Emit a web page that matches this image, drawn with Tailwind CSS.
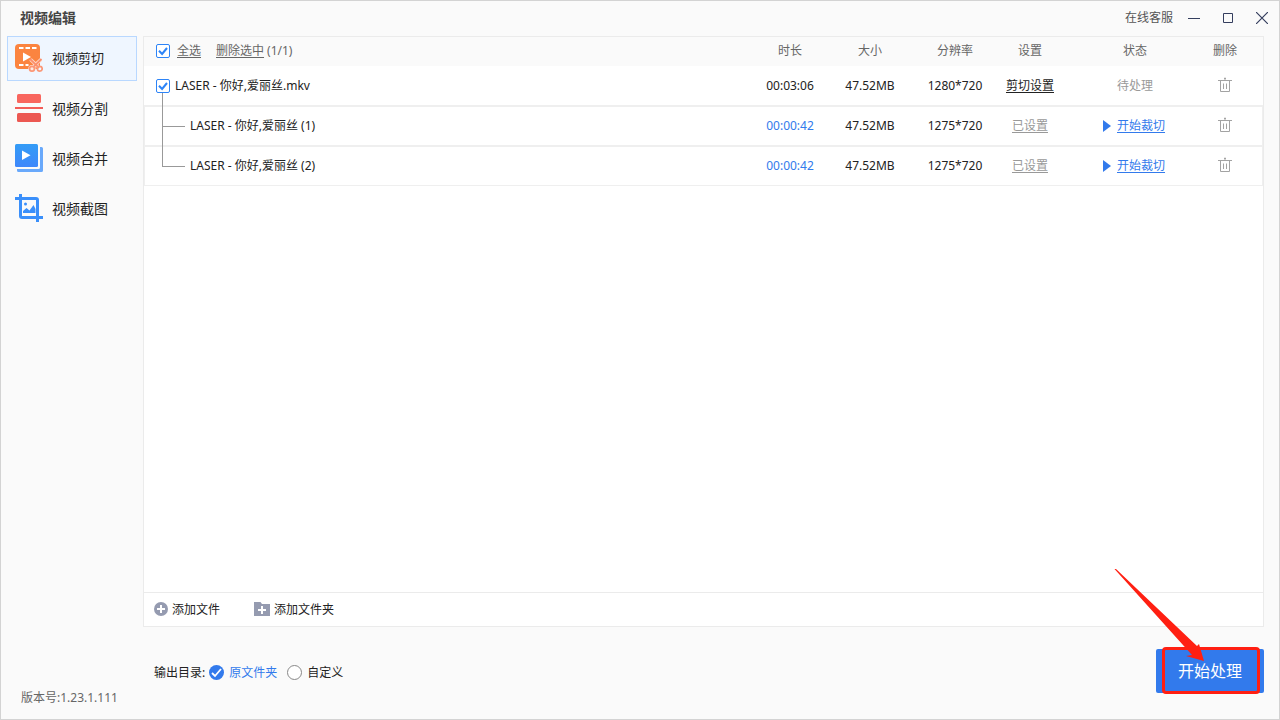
<!DOCTYPE html>
<html lang="zh-CN">
<head>
<meta charset="utf-8">
<meta name="viewport" content="width=device-width, initial-scale=1">
<title>视频编辑</title>
<script src="https://cdn.jsdelivr.net/npm/@tailwindcss/browser@4"></script>
</head>
<body class="flex h-screen flex-col border border-[#d3d3d3] bg-[#fafafa] font-['Noto_Sans','Noto_Sans_CJK_SC',sans-serif] text-xs text-[#333]">
<svg class="hidden" aria-hidden="true">
  <defs>
    <symbol id="trash" viewBox="0 0 14 16"><path d="M0 3.500h14M7 0.500v3M6 1.500h2M2.500 3.500v11h9v-11M5.500 6.500v5.500M8.500 6.500v5.500" fill="none" stroke="#a3a3a3"/></symbol>
    <symbol id="tick" viewBox="0 0 14 14"><path d="M3 6.700l3.100 3.300L11 4" fill="none" stroke="#2d84f7" stroke-width="2"/></symbol>
    <symbol id="play" viewBox="0 0 8 12"><path d="M0 0l8 6-8 6z" fill="#327aec"/></symbol>
  </defs>
</svg>

<header class="flex h-[35px] shrink-0 items-center justify-between pr-[11px] pb-px pl-[19px]">
  <h1 class="text-sm font-semibold text-[#444]">视频编辑</h1>
  <div class="flex items-center">
    <a href="#" class="mr-[15px] text-[#555]">在线客服</a>
    <div class="flex items-center gap-[22px]">
      <button type="button" aria-label="最小化"><svg class="block" width="12" height="12" viewBox="0 0 12 12"><path d="M0 6.500h12" stroke="#343e5e"/></svg></button>
      <button type="button" aria-label="最大化"><svg class="block" width="12" height="12" viewBox="0 0 12 12"><path d="M1.500 1.500h9v9h-9z" fill="none" stroke="#343e5e"/></svg></button>
      <button type="button" aria-label="关闭"><svg class="block" width="12" height="12" viewBox="0 0 12 12"><path d="M0 0l12 12M12 0L0 12" stroke="#343e5e" stroke-width="1.200"/></svg></button>
    </div>
  </div>
</header>

<div class="flex min-h-0 flex-1">
  <aside class="flex w-[142px] shrink-0 flex-col justify-between pb-[13px] pl-[6px]">
    <nav class="flex w-[130px] flex-col gap-[5px] text-sm text-[#222]">
      <a href="#" aria-current="page" class="flex h-[45px] items-center gap-[9px] border border-[#b9d8ff] bg-[#eff6ff] pl-[7px]">
        <svg class="mb-[2px]" width="28" height="28" viewBox="0 0 28 28">
          <rect width="25" height="25" rx="4" fill="#fb8440"/>
          <path d="M4 4h4.500M10.500 4h4.500M17 4h4.500M4 21h4.500M10.500 21h3" stroke="#fff" stroke-width="2"/>
          <path d="M8 8.500l8 4.500-8 4.500z" fill="#fff"/>
          <path d="M15.500 15.500L23 22.500M26 15.500L18.500 22.500" stroke="#fdd9cb" stroke-width="3.500"/>
          <circle cx="17" cy="24.500" r="3.600" fill="#fdeae2"/>
          <path d="M15 15L23 22.800M26.500 15L18.500 22.800" stroke="#fb8f6c" stroke-width="1.800"/>
          <g fill="none" stroke="#fb9676" stroke-width="1.700"><circle cx="17" cy="24.700" r="2.400"/><circle cx="24.800" cy="24.700" r="2.400"/></g>
        </svg>
        <span class="text-[13px]">视频剪切</span>
      </a>
      <a href="#" class="flex h-[45px] items-center gap-[9px] border border-transparent pl-[7px]">
        <svg class="mb-[2px]" width="28" height="28" viewBox="0 0 28 28">
          <rect x="2" width="24" height="9" rx="1.500" fill="#f9665e"/>
          <rect y="13" width="28" height="2" fill="#f35d58"/>
          <rect x="2" y="19" width="24" height="9" rx="1.500" fill="#ec5852"/>
        </svg>
        <span>视频分割</span>
      </a>
      <a href="#" class="flex h-[45px] items-center gap-[9px] border border-transparent pl-[7px]">
        <svg class="mb-[2px]" width="28" height="28" viewBox="0 0 28 28">
          <defs><linearGradient id="blue" x1="0" y1="0" x2="0" y2="1"><stop stop-color="#339cf6"/><stop offset="1" stop-color="#3e87fb"/></linearGradient></defs>
          <path d="M25 3h1.500q1.500 0 1.500 1.500v22q0 1.500-1.500 1.500h-23q-1.500 0-1.500-1.500V25h21.500q1.500 0 1.500-1.500z" fill="#69a9fb"/>
          <rect width="23" height="23" rx="1.500" fill="url(#blue)"/>
          <path d="M7 6.500l8.500 4.800L7 16z" fill="#fff"/>
        </svg>
        <span>视频合并</span>
      </a>
      <a href="#" class="flex h-[45px] items-center gap-[9px] border border-transparent pl-[7px]">
        <svg class="mb-[2px]" width="28" height="28" viewBox="0 0 28 28">
          <path d="M0 4.500h21q1.500 0 1.500 1.500v22M5.500 0v22q0 1.500 1.500 1.500h21" fill="none" stroke="#3a8ffa" stroke-width="3"/>
          <circle cx="10.500" cy="10" r="1.500" fill="#3a8ffa"/>
          <path d="M8 19v-2l3.500-3 3 2.500 4-5.500 2 4v4z" fill="#3a8ffa"/>
        </svg>
        <span>视频截图</span>
      </a>
    </nav>
    <p class="pl-[14px] text-[#666]">版本号:1.23.1.111</p>
  </aside>

  <main class="flex min-w-0 flex-1 flex-col pr-[15px]">
    <section class="flex min-h-0 flex-1 flex-col border border-[#ebebeb] bg-white">
      <div class="min-h-0 flex-1">
        <table class="w-full table-fixed border-separate border-spacing-0">
          <colgroup><col><col class="w-20"><col class="w-20"><col class="w-[90px]"><col class="w-[60px]"><col class="w-[150px]"><col class="w-[53px]"></colgroup>
          <thead class="bg-[#fafafa] text-[#666]">
            <tr class="h-[29px]">
              <th class="p-0 pb-[2px] pl-3 font-normal">
                <div class="flex items-center">
                  <label class="mr-[7px] grid size-[14px]">
                    <input type="checkbox" checked aria-label="全选" class="col-start-1 row-start-1 size-[14px] appearance-none rounded-xs border border-[#2d84f7] bg-white">
                    <svg class="pointer-events-none col-start-1 row-start-1 size-[14px]"><use href="#tick"/></svg>
                  </label>
                  <button type="button" class="mr-[15px] underline underline-offset-2">全选</button>
                  <button type="button" class="mr-[3px] underline underline-offset-2">删除选中</button>
                  <span>(1/1)</span>
                </div>
              </th>
              <th class="p-0 pb-[2px] font-normal">时长</th>
              <th class="p-0 pb-[2px] font-normal">大小</th>
              <th class="p-0 pb-[2px] font-normal">分辨率</th>
              <th class="p-0 pb-[2px] font-normal">设置</th>
              <th class="p-0 pb-[2px] font-normal">状态</th>
              <th class="p-0 pr-[23px] pb-[2px] font-normal">删除</th>
            </tr>
          </thead>
          <tbody class="text-center text-[#222]">
            <tr class="h-10">
              <td class="border-b border-[#efefef] p-0 pl-3">
                <label class="flex items-center gap-[5px]">
                  <span class="grid size-[14px]">
                    <input type="checkbox" checked class="col-start-1 row-start-1 size-[14px] appearance-none rounded-xs border border-[#2d84f7] bg-white">
                    <svg class="pointer-events-none col-start-1 row-start-1 size-[14px]"><use href="#tick"/></svg>
                  </span>
                  <span>LASER - 你好,爱丽丝.mkv</span>
                </label>
              </td>
              <td class="border-b border-[#efefef] p-0">00:03:06</td>
              <td class="border-b border-[#efefef] p-0">47.52MB</td>
              <td class="border-b border-[#efefef] p-0">1280*720</td>
              <td class="border-b border-[#efefef] p-0"><a href="#" class="underline underline-offset-2">剪切设置</a></td>
              <td class="border-b border-[#efefef] p-0 pl-[57px] text-left text-[#999]">待处理</td>
              <td class="border-b border-[#efefef] p-0 pr-[23px] pb-[2px]"><button type="button" aria-label="删除" class="block w-full"><svg class="mx-auto h-4 w-[14px]"><use href="#trash"/></svg></button></td>
            </tr>
            <tr class="h-10">
              <td class="relative border-y border-l border-[#efefef] p-0 pl-[45px] text-left"><span class="absolute -top-[14px] left-[17px] h-[34px] w-[23px] border-b border-l border-[#999]"></span>LASER - 你好,爱丽丝 (1)</td>
              <td class="border-y border-[#efefef] p-0 text-[#327aec]">00:00:42</td>
              <td class="border-y border-[#efefef] p-0">47.52MB</td>
              <td class="border-y border-[#efefef] p-0">1275*720</td>
              <td class="border-y border-[#efefef] p-0 text-[#999]"><a href="#" class="underline underline-offset-2">已设置</a></td>
              <td class="border-y border-[#efefef] p-0 pl-[43px]"><a href="#" class="flex items-center gap-[6px] text-[#327aec]"><svg class="h-3 w-2"><use href="#play"/></svg><span class="underline underline-offset-2">开始裁切</span></a></td>
              <td class="border-y border-r border-[#efefef] p-0 pr-[22px] pb-[2px]"><button type="button" aria-label="删除" class="block w-full"><svg class="mx-auto h-4 w-[14px]"><use href="#trash"/></svg></button></td>
            </tr>
            <tr class="h-10">
              <td class="relative border-y border-l border-[#efefef] p-0 pl-[45px] text-left"><span class="absolute -top-[21px] left-[17px] h-[41px] w-[23px] border-b border-l border-[#999]"></span>LASER - 你好,爱丽丝 (2)</td>
              <td class="border-y border-[#efefef] p-0 text-[#327aec]">00:00:42</td>
              <td class="border-y border-[#efefef] p-0">47.52MB</td>
              <td class="border-y border-[#efefef] p-0">1275*720</td>
              <td class="border-y border-[#efefef] p-0 text-[#999]"><a href="#" class="underline underline-offset-2">已设置</a></td>
              <td class="border-y border-[#efefef] p-0 pl-[43px]"><a href="#" class="flex items-center gap-[6px] text-[#327aec]"><svg class="h-3 w-2"><use href="#play"/></svg><span class="underline underline-offset-2">开始裁切</span></a></td>
              <td class="border-y border-r border-[#efefef] p-0 pr-[22px] pb-[2px]"><button type="button" aria-label="删除" class="block w-full"><svg class="mx-auto h-4 w-[14px]"><use href="#trash"/></svg></button></td>
            </tr>
          </tbody>
        </table>
      </div>
      <div class="flex h-[34px] shrink-0 items-center gap-[34px] border-t border-[#ebebeb] pl-[10px] text-[#222]">
        <button type="button" class="flex items-center gap-1">
          <svg class="mb-[2px]" width="14" height="14" viewBox="0 0 14 14"><circle cx="7" cy="7" r="7" fill="#959bb0"/><path d="M7 3v8M3 7h8" stroke="#fff" stroke-width="2"/></svg>
          <span>添加文件</span>
        </button>
        <button type="button" class="flex items-center gap-1">
          <svg class="mb-[2px]" width="16" height="14" viewBox="0 0 16 14"><path d="M0 0h6.500l1.500 2h8v12H0z" fill="#959bb0"/><path d="M8 4v8M4 8h8" stroke="#fff" stroke-width="2"/></svg>
          <span>添加文件夹</span>
        </button>
      </div>
    </section>

    <footer class="flex h-[92px] shrink-0 items-center justify-between pb-1 pl-[11px]">
      <div role="radiogroup" aria-labelledby="output-label" class="flex items-center pt-[3px] text-[#222]">
        <span id="output-label" class="mr-1">输出目录:</span>
        <label class="mr-[10px] flex items-center gap-[5px] text-[#327aec]">
          <span class="grid size-[15px]">
            <input type="radio" name="output" checked class="col-start-1 row-start-1 size-[15px] appearance-none rounded-full bg-[#327aec]">
            <svg class="pointer-events-none col-start-1 row-start-1 size-[15px]" viewBox="0 0 15 15"><path d="M3 8l3 3 6-7" fill="none" stroke="#fff" stroke-width="1.800"/></svg>
          </span>
          <span>原文件夹</span>
        </label>
        <label class="flex items-center gap-[5px]">
          <input type="radio" name="output" class="size-[15px] appearance-none rounded-full border border-[#888] bg-white">
          <span>自定义</span>
        </label>
      </div>
      <div class="relative">
        <button type="button" class="h-11 w-[108px] rounded-xs bg-[#327aec] text-base text-white">开始处理</button>
        <div class="pointer-events-none absolute -top-[2px] right-1 h-[47px] w-[98px] rounded-sm border-3 border-[#ff1f12]"></div>
        <svg class="pointer-events-none absolute -top-20 right-[59px]" width="91" height="93" viewBox="0 0 91 93"><path d="M0.500 0L2 0L83 77L85 75L90 92L72 87L78 86Z" fill="#ff1f12"/></svg>
      </div>
    </footer>
  </main>
</div>
</body>
</html>
